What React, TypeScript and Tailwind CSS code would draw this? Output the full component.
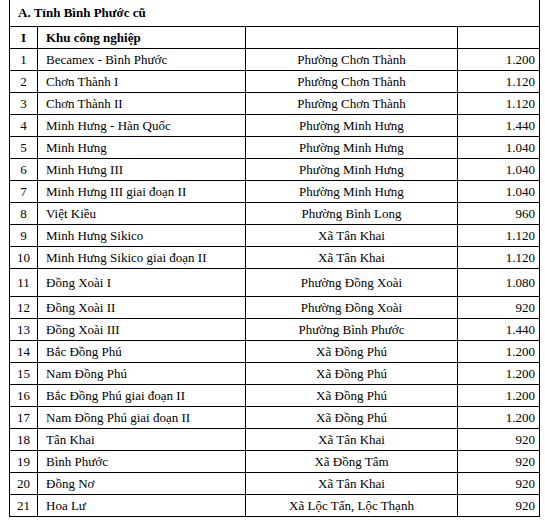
const rows: [string, string, string, string][] = [
  ["1", "Becamex - Bình Phước", "Phường Chơn Thành", "1.200"],
  ["2", "Chơn Thành I", "Phường Chơn Thành", "1.120"],
  ["3", "Chơn Thành II", "Phường Chơn Thành", "1.120"],
  ["4", "Minh Hưng - Hàn Quốc", "Phường Minh Hưng", "1.440"],
  ["5", "Minh Hưng", "Phường Minh Hưng", "1.040"],
  ["6", "Minh Hưng III", "Phường Minh Hưng", "1.040"],
  ["7", "Minh Hưng III giai đoạn II", "Phường Minh Hưng", "1.040"],
  ["8", "Việt Kiều", "Phường Bình Long", "960"],
  ["9", "Minh Hưng Sikico", "Xã Tân Khai", "1.120"],
  ["10", "Minh Hưng Sikico giai đoạn II", "Xã Tân Khai", "1.120"],
  ["11", "Đồng Xoài I", "Phường Đồng Xoài", "1.080"],
  ["12", "Đồng Xoài II", "Phường Đồng Xoài", "920"],
  ["13", "Đồng Xoài III", "Phường Bình Phước", "1.440"],
  ["14", "Bắc Đồng Phú", "Xã Đồng Phú", "1.200"],
  ["15", "Nam Đồng Phú", "Xã Đồng Phú", "1.200"],
  ["16", "Bắc Đồng Phú giai đoạn II", "Xã Đồng Phú", "1.200"],
  ["17", "Nam Đồng Phú giai đoạn II", "Xã Đồng Phú", "1.200"],
  ["18", "Tân Khai", "Xã Tân Khai", "920"],
  ["19", "Bình Phước", "Xã Đồng Tâm", "920"],
  ["20", "Đồng Nơ", "Xã Tân Khai", "920"],
  ["21", "Hoa Lư", "Xã Lộc Tấn, Lộc Thạnh", "920"],
];

export default function App() {
  return (
    <div className="w-[545px] h-[522px] overflow-hidden bg-white pl-[9px] font-['Liberation_Serif',serif] text-[13px] text-black">
      <table className="-mt-px w-[530px] table-fixed border-collapse">
        <colgroup>
          <col className="w-[28px]" />
          <col className="w-[208px]" />
          <col className="w-[212px]" />
          <col className="w-[82px]" />
        </colgroup>
        <tbody>
          <tr className="h-[27px]">
            <td colSpan={4} className="border border-black px-2 font-bold">
              A. Tỉnh Bình Phước cũ
            </td>
          </tr>
          <tr className="h-[22px]">
            <td className="border border-black p-0 text-center font-bold">I</td>
            <td className="border border-black px-2 font-bold">Khu công nghiệp</td>
            <td className="border border-black"></td>
            <td className="border border-black"></td>
          </tr>
          {rows.map(([n, name, ward, area]) => (
            <tr key={n} className={n === "11" ? "h-[28px]" : "h-[22px]"}>
              <td className="border border-black p-0 text-center">{n}</td>
              <td className="border border-black px-2 whitespace-nowrap">{name}</td>
              <td className="border border-black px-1 text-center whitespace-nowrap">{ward}</td>
              <td className="border border-black px-1 text-right">{area}</td>
            </tr>
          ))}
        </tbody>
      </table>
    </div>
  );
}
